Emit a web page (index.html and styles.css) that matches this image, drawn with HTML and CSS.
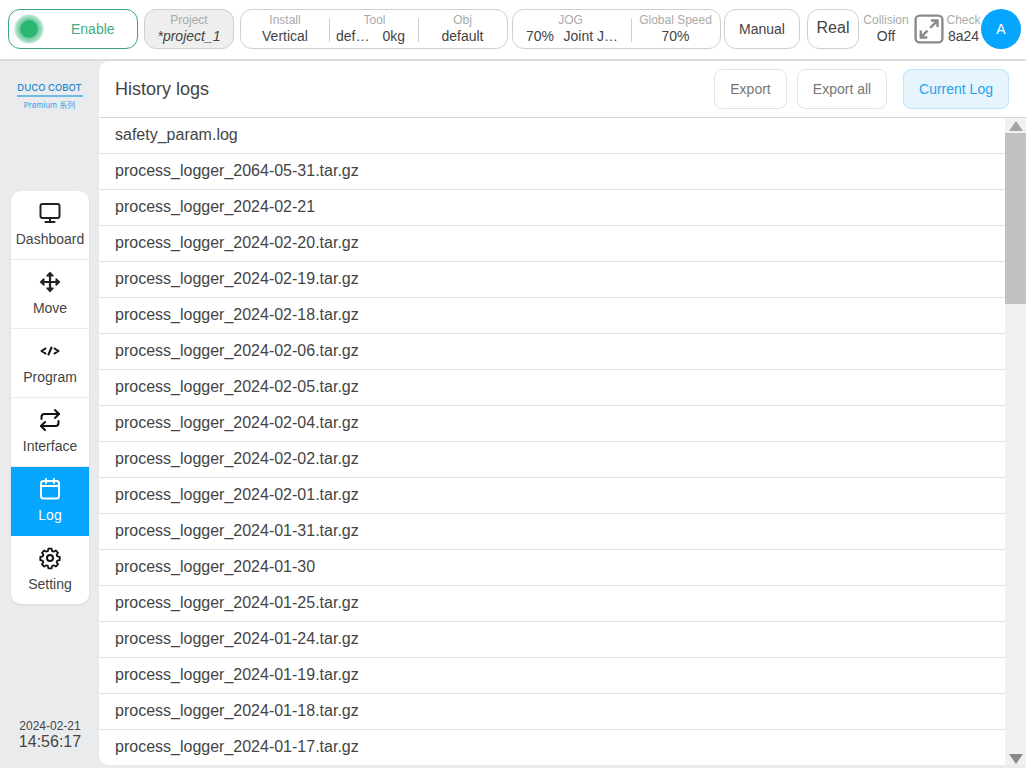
FILE: index.html
```html
<!DOCTYPE html>
<html lang="en">
<head>
<meta charset="utf-8">
<title>History logs</title>
<link rel="stylesheet" href="styles.css">
</head>
<body>
<div class="app">
  <header class="topbar">
    <div class="pill enable"><span class="dot"></span><span class="enable-text">Enable</span></div>
    <div class="pill project">
      <div class="cell"><span class="label">Project</span><span class="value italic">*project_1</span></div>
    </div>
    <div class="pill install">
      <div class="cell c-install"><span class="label">Install</span><span class="value">Vertical</span></div>
      <div class="cell c-tool"><span class="label">Tool</span><span class="value split"><span>def…</span><span>0kg</span></span></div>
      <div class="cell c-obj"><span class="label">Obj</span><span class="value">default</span></div>
    </div>
    <div class="pill jog">
      <div class="cell c-jog"><span class="label">JOG</span><span class="value split"><span>70%</span><span>Joint J…</span></span></div>
      <div class="cell c-speed"><span class="label">Global Speed</span><span class="value">70%</span></div>
    </div>
    <div class="pill manual">Manual</div>
    <div class="pill real">Real</div>
    <div class="plain collision"><span class="label">Collision</span><span class="value">Off</span></div>
    <svg class="expand" viewBox="0 0 30 30" fill="none" stroke="#8a8a8a" stroke-width="2.4">
      <rect x="1.6" y="1.6" width="26.8" height="26.8" rx="4"/>
      <path d="M17 6.5h6.5V13M23.2 6.8l-7 7M6.8 16.5v7h6.5M7 23.2l6.5-6.5"/>
    </svg>
    <div class="plain check"><span class="label">Check</span><span class="value">8a24</span></div>
    <div class="avatar">A</div>
  </header>
  <div class="body">
    <aside class="sidebar">
      <div class="logo">
        <span class="logo-name">DUCO COBOT</span>
        <span class="logo-rule"></span>
        <span class="logo-sub">Premium 系列</span>
      </div>
      <nav class="nav">
        <div class="nav-item">
          <svg class="icon" viewBox="0 0 24 24" fill="none" stroke="#222" stroke-width="2" stroke-linecap="round" stroke-linejoin="round"><rect x="2.500" y="3" width="19" height="14" rx="2"/><path d="M12 17v3.500M7.500 21h9"/></svg>
          <span>Dashboard</span>
        </div>
        <div class="nav-item">
          <svg class="icon" viewBox="0 0 24 24" fill="#222" stroke="#222" stroke-width="1.200" stroke-linejoin="round"><path d="M12 2.500l3.200 3.400H8.800zM12 21.500l-3.200-3.400h6.400zM2.500 12l3.400-3.200v6.400zM21.500 12l-3.400 3.200V8.800z"/><path d="M12 5v14M4.500 12h15" stroke-width="2.200" fill="none"/></svg>
          <span>Move</span>
        </div>
        <div class="nav-item">
          <svg class="icon" viewBox="0 0 24 24" fill="none" stroke="#111" stroke-width="2" stroke-linecap="round" stroke-linejoin="round"><path d="M7.500 9.500L3.500 12l4 2.500M16.500 9.500l4 2.500-4 2.500M13.500 8.500l-3 7"/></svg>
          <span>Program</span>
        </div>
        <div class="nav-item">
          <svg class="icon" viewBox="0 0 24 24" fill="none" stroke="#111" stroke-width="2" stroke-linecap="round" stroke-linejoin="round"><path d="M17 2l4 4-4 4"/><path d="M3.500 11V9a3 3 0 0 1 3-3H21"/><path d="M7 22l-4-4 4-4"/><path d="M20.500 13v2a3 3 0 0 1-3 3H3"/></svg>
          <span>Interface</span>
        </div>
        <div class="nav-item active">
          <svg class="icon" viewBox="0 0 24 24" fill="none" stroke="#fff" stroke-width="2" stroke-linecap="round" stroke-linejoin="round"><rect x="3" y="4" width="18" height="17.500" rx="2.500"/><path d="M3 9h18M8 2v4M16 2v4"/></svg>
          <span>Log</span>
        </div>
        <div class="nav-item">
          <svg class="icon" viewBox="0 0 24 24" fill="none" stroke="#111" stroke-width="2" stroke-linejoin="round"><circle cx="12" cy="12" r="3"/><path d="M10.200 2.500h3.600l.5 2.700 1.700.8 2.400-1.400 2.500 2.600-1.500 2.300.7 1.700 2.700.6v3.600l-2.700.6-.7 1.700 1.500 2.300-2.500 2.500-2.400-1.400-1.700.8-.5 2.600h-3.600l-.5-2.600-1.700-.8-2.400 1.400-2.500-2.500 1.500-2.300-.7-1.700-2.700-.6v-3.600l2.700-.6.7-1.700-1.500-2.300 2.500-2.600 2.400 1.400 1.700-.8z" transform="translate(12 12) scale(.9) translate(-12 -13)"/></svg>
          <span>Setting</span>
        </div>
      </nav>
      <div class="clock"><span class="date">2024-02-21</span><span class="time">14:56:17</span></div>
    </aside>
    <main class="panel">
      <div class="panel-head">
        <h1 class="title">History logs</h1>
        <button class="btn">Export</button>
        <button class="btn btn-all">Export all</button>
        <button class="btn btn-current">Current Log</button>
      </div>
      <div class="panel-body">
        <ul class="list">
          <li>safety_param.log</li>
          <li>process_logger_2064-05-31.tar.gz</li>
          <li>process_logger_2024-02-21</li>
          <li>process_logger_2024-02-20.tar.gz</li>
          <li>process_logger_2024-02-19.tar.gz</li>
          <li>process_logger_2024-02-18.tar.gz</li>
          <li>process_logger_2024-02-06.tar.gz</li>
          <li>process_logger_2024-02-05.tar.gz</li>
          <li>process_logger_2024-02-04.tar.gz</li>
          <li>process_logger_2024-02-02.tar.gz</li>
          <li>process_logger_2024-02-01.tar.gz</li>
          <li>process_logger_2024-01-31.tar.gz</li>
          <li>process_logger_2024-01-30</li>
          <li>process_logger_2024-01-25.tar.gz</li>
          <li>process_logger_2024-01-24.tar.gz</li>
          <li>process_logger_2024-01-19.tar.gz</li>
          <li>process_logger_2024-01-18.tar.gz</li>
          <li>process_logger_2024-01-17.tar.gz</li>
        </ul>
        <div class="scrollbar">
          <span class="arrow up"></span>
          <span class="thumb"></span>
          <span class="arrow down"></span>
        </div>
      </div>
    </main>
  </div>
</div>
</body>
</html>
```
FILE: styles.css
```css
* { box-sizing: border-box; }
html, body { margin: 0; height: 100%; }
body {
  font-family: "Liberation Sans", Arial, sans-serif;
  background: #e9ebed;
  overflow: hidden;
}
.app { width: 1026px; height: 768px; display: flex; flex-direction: column; }

.topbar {
  height: 61px;
  flex: none;
  display: flex;
  align-items: center;
  padding: 0 5px 1px 8px;
  background: #fff;
  border-bottom: 2px solid #dcdcdc;
}
.pill {
  height: 40px;
  flex: none;
  border: 1px solid #cfcfcf;
  border-radius: 12px;
  display: flex;
  align-items: center;
  font-size: 14px;
  color: #444;
  background: #fff;
}
.enable { width: 130px; border-color: #3aa57d; position: relative; }
.dot {
  width: 30px;
  height: 30px;
  margin-left: 5px;
  border-radius: 50%;
  background: radial-gradient(circle closest-side, #2bb573 0, #2bb573 54%, #6fcb9f 62%, #a5dfc3 85%, rgba(190, 235, 212, .4) 100%);
}
.enable-text { margin-left: 27px; color: #3fae7f; }
.project { width: 90px; margin-left: 6px; background: #eeeeee; justify-content: center; }
.install { width: 268px; margin-left: 6px; }
.jog { width: 209px; margin-left: 4px; }
.manual { width: 76px; margin-left: 3px; justify-content: center; }
.real { width: 52px; margin-left: 7px; justify-content: center; font-size: 16px; padding-bottom: 2px; }

.cell, .plain {
  display: flex;
  flex-direction: column;
  align-items: center;
  line-height: 15px;
  white-space: nowrap;
}
.label { font-size: 12px; color: #aaa; }
.value { font-size: 14px; color: #444; line-height: 17px; }
.italic { font-style: italic; }
.split { display: flex; justify-content: space-between; width: 100%; }
.cell + .cell { position: relative; }
.cell + .cell::before {
  content: "";
  position: absolute;
  left: 0;
  top: 8px;
  height: 24px;
  border-left: 1px solid #cfcfcf;
}
.install .cell, .jog .cell { height: 38px; justify-content: center; }
.c-install { width: 88px; }
.c-tool { width: 89px; padding: 0 13px 0 7px; }
.c-tool .label { margin-left: 8px; }
.c-obj { width: 89px; }
.c-jog { width: 118px; padding: 0 13px; }
.c-jog .label { margin-right: 3px; }
.c-speed { width: 89px; }
.collision { width: 46px; margin-left: 4px; }
.expand { width: 30px; height: 30px; margin-left: 5px; flex: none; }
.check { width: 33px; margin-left: 3px; }
.avatar {
  width: 40px;
  height: 40px;
  margin-left: 1px;
  flex: none;
  border-radius: 50%;
  background: #06a6ff;
  color: #fff;
  font-size: 14px;
  display: flex;
  align-items: center;
  justify-content: center;
}

.body { flex: 1; min-height: 0; display: flex; padding-bottom: 3px; }
.sidebar {
  width: 99px;
  flex: none;
  display: flex;
  flex-direction: column;
  align-items: center;
}
.logo { margin-top: 21px; display: flex; flex-direction: column; align-items: center; font-family: Inter, "Liberation Sans", "Noto Sans CJK SC", sans-serif; }
.logo-name { font-size: 9.500px; font-weight: 500; line-height: 12px; color: #1c86d2; white-space: nowrap; }
.logo-rule { width: 66px; height: 2px; background: #6cbce8; margin-top: 1px; }
.logo-sub { font-size: 8px; line-height: 12px; margin-top: 2px; color: #3aa4e4; white-space: nowrap; }
.nav {
  width: 78px;
  margin: 80px 0 0 1px;
  background: #fff;
  border-radius: 10px;
  overflow: hidden;
  box-shadow: 0 1px 3px rgba(0, 0, 0, .08);
}
.nav-item {
  height: 69px;
  display: flex;
  flex-direction: column;
  align-items: center;
  padding-top: 10px;
  font-size: 14px;
  line-height: 16px;
  color: #444;
  border-bottom: 1px solid #ececec;
}
.nav-item:last-child { border-bottom: 0; height: 68px; }
.nav-item.active { background: #06a6ff; color: #fff; border-bottom: 0; }
.icon { width: 24px; height: 24px; margin-bottom: 6px; flex: none; }
.clock { margin: auto 0 15px 1px; display: flex; flex-direction: column; align-items: center; color: #444; }
.date { font-size: 12px; line-height: 16px; }
.time { font-size: 16px; line-height: 16px; }

.panel {
  flex: 1;
  min-width: 0;
  background: #fff;
  border-radius: 10px 0 0 10px;
  overflow: hidden;
  display: flex;
  flex-direction: column;
}
.panel-head {
  height: 57px;
  flex: none;
  display: flex;
  align-items: center;
  padding: 0 17px 1px 16px;
  border-bottom: 1px solid #d6d6d6;
}
.title { margin: 2px auto 0 0; font-size: 18px; font-weight: 400; color: #444; }
.btn {
  height: 40px;
  padding: 0;
  font: 14px "Liberation Sans", Arial, sans-serif;
  color: #777;
  background: #fff;
  border: 1px solid #e2e2e2;
  border-radius: 8px;
  width: 73px;
}
.btn-all { width: 90px; margin-left: 10px; }
.btn-current { width: 106px; margin-left: 16px; color: #26a2ee; background: #e6f5fd; border-color: #bfe4f7; }
.panel-body { flex: 1; min-height: 0; display: flex; }
.list { flex: 1; min-width: 0; margin: 0; padding: 0; list-style: none; overflow: hidden; }
.list li {
  height: 36px;
  padding-left: 16px;
  font-size: 16px;
  line-height: 34px;
  color: #444;
  border-bottom: 1px solid #e2e2e2;
}
.scrollbar {
  width: 21px;
  flex: none;
  background: #f1f1f1;
  display: flex;
  flex-direction: column;
  align-items: center;
}
.arrow { width: 0; height: 0; border-left: 7px solid transparent; border-right: 7px solid transparent; }
.arrow.up { margin-top: 3px; border-bottom: 10px solid #a3a3a3; }
.arrow.down { margin-top: auto; margin-bottom: 1px; border-top: 10px solid #8a8a8a; }
.thumb { width: 100%; height: 171px; margin-top: 2px; background: #c1c1c1; }
```
